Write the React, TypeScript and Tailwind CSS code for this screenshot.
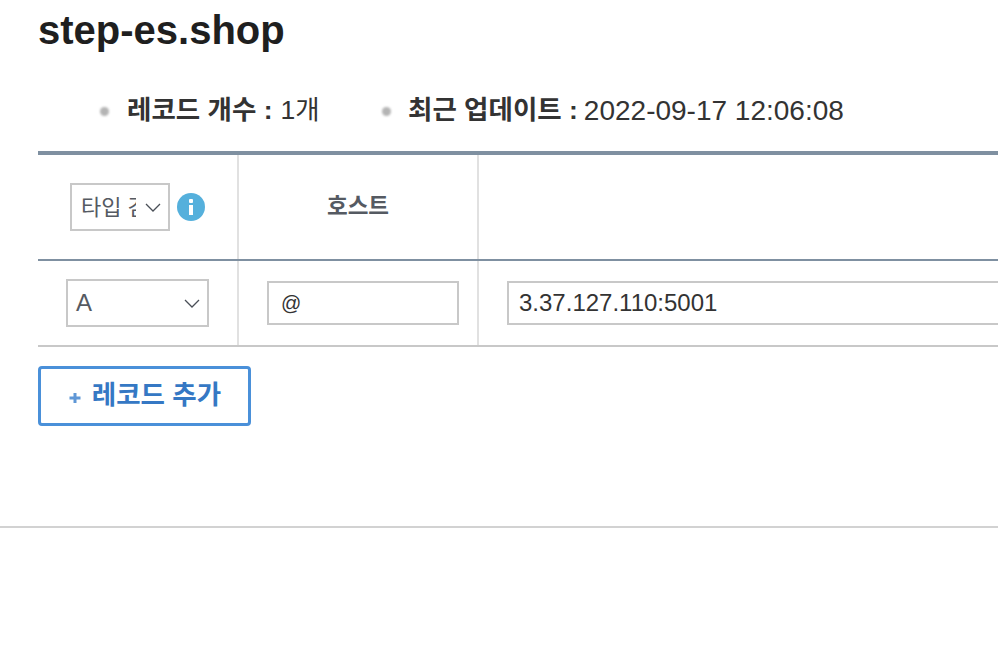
import React from 'react';

const Chevron = () => (
    <svg width="16" height="9" viewBox="0 0 16 9" fill="none" stroke="#4a4f57" strokeWidth="1.3" className="shrink-0">
        <path d="M1 1l7 7 7-7" />
    </svg>
);

const Bullet = () => <span className="w-[9px] h-[9px] rounded-full bg-[#b4b4b4] blur-[1px] shrink-0" />;

const App: React.FC = () => {
    return (
        <div className="w-[998px] h-[672px] overflow-hidden bg-white font-['Liberation_Sans','Noto_Sans_CJK_KR',sans-serif]">
            <div className="pl-[38px] h-[526px]">
                <h1 className="text-[40px] leading-[42px] pt-[9px] font-bold text-[#1f1f1f]">step-es.shop</h1>

                <ul className="flex items-center mt-[43px] pl-[62px] h-[34px] text-[26.5px] text-[#333]">
                    <li className="flex items-center w-[282px]">
                        <Bullet />
                        <span className="ml-[18px] font-bold">레코드 개수 :</span>
                        <span className="ml-[8px]">1개</span>
                    </li>
                    <li className="flex items-center">
                        <Bullet />
                        <span className="ml-[17px] font-bold">최근 업데이트 :</span>
                        <span className="ml-[6px] text-[28px]">2022-09-17 12:06:08</span>
                    </li>
                </ul>

                <div className="mt-[23px] w-[960px] border-t-4 border-[#7f90a1]">
                    <div className="flex h-[106px] border-b-2 border-[#7f90a1]">
                        <div className="w-[201px] shrink-0 flex items-center justify-center gap-[7px] border-r-2 border-[#e1e1e1]">
                            <div className="w-[100px] h-[48px] flex items-center pl-[9px] border-2 border-[#c8c8c8] text-[22px] text-[#555a62]">
                                <span className="w-[55px] overflow-hidden whitespace-nowrap">타입 검색</span>
                                <span className="ml-[9px] flex">
                                    <Chevron />
                                </span>
                            </div>
                            <svg width="28" height="28" viewBox="0 0 28 28" className="shrink-0">
                                <circle cx="14" cy="14" r="14" fill="#55b0dc" />
                                <rect x="12" y="6" width="4" height="4" rx="1" fill="#fff" />
                                <rect x="12" y="12" width="4" height="10" fill="#fff" />
                            </svg>
                        </div>
                        <div className="w-[240px] shrink-0 flex items-center justify-center border-r-2 border-[#e1e1e1] text-[22.5px] font-bold text-[#555a62]">
                            호스트
                        </div>
                        <div className="flex-1" />
                    </div>

                    <div className="flex h-[86px] border-b-2 border-[#c8c8c8]">
                        <div className="w-[201px] shrink-0 flex items-center border-r-2 border-[#e1e1e1] pl-[28px]">
                            <div className="w-[143px] h-[48px] flex items-center justify-between pl-[8px] pr-[7px] border-2 border-[#c8c8c8] text-[24px] text-[#555a62]">
                                <span>A</span>
                                <Chevron />
                            </div>
                        </div>
                        <div className="w-[240px] shrink-0 flex items-center border-r-2 border-[#e1e1e1] pl-[28px]">
                            <div className="w-[192px] h-[44px] flex items-center pl-[12px] border-2 border-[#c8c8c8] text-[20px] text-[#333]">
                                @
                            </div>
                        </div>
                        <div className="flex-1 flex items-center pl-[28px]">
                            <div className="w-[600px] h-[44px] shrink-0 flex items-center pl-[10px] border-2 border-[#c8c8c8] text-[24px] text-[#333]">
                                3.37.127.110:5001
                            </div>
                        </div>
                    </div>
                </div>

                <button className="mt-[19px] w-[213px] h-[60px] flex items-center justify-center border-[3px] border-[#4a90d9] rounded-[4px] text-[26.5px] font-bold text-[#3578c4]">
                    <svg width="14" height="14" viewBox="0 0 14 14" className="mr-[10px] mt-[4px]">
                        <path d="M7 2v10M1.5 7h11" stroke="#5f97d6" strokeWidth="3" />
                    </svg>
                    레코드 추가
                </button>
            </div>
            <div className="border-t-2 border-[#d2d2d2]" />
        </div>
    );
};

export default App;
